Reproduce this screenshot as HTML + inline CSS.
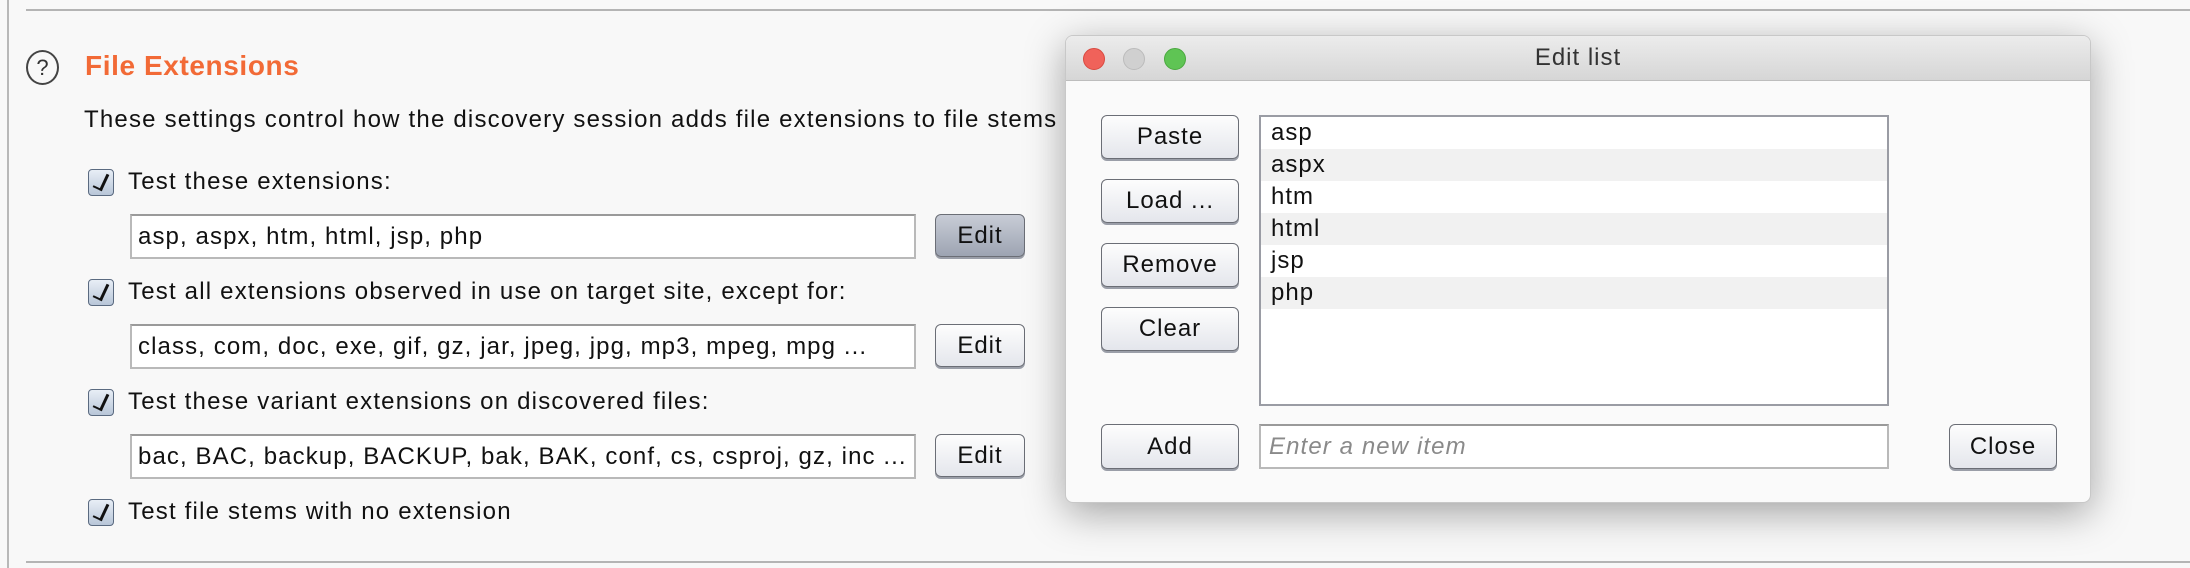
<!DOCTYPE html>
<html><head><meta charset="utf-8"><style>
*{box-sizing:border-box;margin:0;padding:0}
body{width:2190px;height:568px;background:#f8f8f8;position:relative;overflow:hidden;font-family:"Liberation Sans",sans-serif;color:#111}
.a{position:absolute}
.t{font-size:24px;letter-spacing:1.2px;white-space:nowrap}
.cb{position:absolute;width:26px;height:27px;border:1.5px solid #5a6a80;border-radius:4px;background:linear-gradient(#e8eef6,#b8c6d8);}
.cb:after{content:"";position:absolute;left:7px;top:2px;width:7px;height:16px;border-right:3px solid #111;border-bottom:2px solid #111;transform:rotate(25deg)}
.fld{position:absolute;background:#fff;border:2px solid #b9b9b9;border-top-color:#9a9a9a;font-size:24px;letter-spacing:1.1px;padding-left:6px;display:flex;align-items:center;white-space:nowrap;overflow:hidden}
.btn{position:absolute;border:1.5px solid #6b6e76;border-radius:6px;background:linear-gradient(#fdfdfd,#e4e6ec);box-shadow:0 2px 0 #9a9ea8;font-size:24px;letter-spacing:1px;display:flex;align-items:center;justify-content:center}
.row{height:32px;font-size:24px;letter-spacing:1px;padding-left:10px;line-height:32px}
</style></head><body>
<div class="a" style="left:7px;top:0;width:2px;height:568px;background:#b8b8b8"></div>
<div class="a" style="left:26px;top:9px;width:2164px;height:2px;background:#b4b4b4"></div>
<div class="a" style="left:26px;top:561px;width:2164px;height:2px;background:#b4b4b4"></div>
<div class="a" style="left:26px;top:50px;width:33px;height:35px;border:2px solid #444;border-radius:50%;font-size:22px;text-align:center;line-height:31px;color:#333">?</div>
<div class="a" style="left:85px;top:50px;font-size:28px;letter-spacing:0.6px;font-weight:bold;color:#f26a36">File Extensions</div>
<div class="a t" style="left:84px;top:106px;">These settings control how the discovery session adds file extensions to file stems that</div>

<div class="cb" style="left:88px;top:169px"></div><div class="a t" style="left:128px;top:168px">Test these extensions:</div>
<div class="fld" style="left:130px;top:214px;width:786px;height:45px">asp, aspx, htm, html, jsp, php</div>
<div class="btn" style="left:935px;top:214px;width:90px;height:43px;background:linear-gradient(#c8ccd6,#9da4b2);">Edit</div>

<div class="cb" style="left:88px;top:279px"></div><div class="a t" style="left:128px;top:278px">Test all extensions observed in use on target site, except for:</div>
<div class="fld" style="left:130px;top:324px;width:786px;height:45px">class, com, doc, exe, gif, gz, jar, jpeg, jpg, mp3, mpeg, mpg ...</div>
<div class="btn" style="left:935px;top:324px;width:90px;height:43px">Edit</div>

<div class="cb" style="left:88px;top:389px"></div><div class="a t" style="left:128px;top:388px">Test these variant extensions on discovered files:</div>
<div class="fld" style="left:130px;top:434px;width:786px;height:45px">bac, BAC, backup, BACKUP, bak, BAK, conf, cs, csproj, gz, inc ...</div>
<div class="btn" style="left:935px;top:434px;width:90px;height:43px">Edit</div>

<div class="cb" style="left:88px;top:499px"></div><div class="a t" style="left:128px;top:498px">Test file stems with no extension</div>

<div class="a" style="left:1065px;top:35px;width:1026px;height:468px;background:#fafafa;border:1px solid #c8c8c8;border-radius:8px;box-shadow:0 10px 40px rgba(0,0,0,0.35);overflow:hidden">
 <div class="a" style="left:0;top:0;width:100%;height:45px;background:linear-gradient(#ececec,#d6d6d6);border-bottom:1px solid #bdbdbd"></div>
 <div class="a" style="left:17px;top:12px;width:22px;height:22px;border-radius:50%;background:#f0625a;border:1px solid #d8493f"></div>
 <div class="a" style="left:57px;top:12px;width:22px;height:22px;border-radius:50%;background:#d0d0d0;border:1px solid #bbb"></div>
 <div class="a" style="left:98px;top:12px;width:22px;height:22px;border-radius:50%;background:#5fc454;border:1px solid #4aa83f"></div>
 <div class="a" style="left:0;top:8px;width:100%;text-align:center;font-size:24px;letter-spacing:1px;color:#333">Edit list</div>
</div>
<div class="btn" style="left:1101px;top:115px;width:138px;height:44px">Paste</div>
<div class="btn" style="left:1101px;top:179px;width:138px;height:44px">Load ...</div>
<div class="btn" style="left:1101px;top:243px;width:138px;height:44px">Remove</div>
<div class="btn" style="left:1101px;top:307px;width:138px;height:44px">Clear</div>
<div class="btn" style="left:1101px;top:424px;width:138px;height:45px">Add</div>
<div class="a" style="left:1259px;top:115px;width:630px;height:291px;background:#fff;border:2px solid #9a9ca4">
 <div class="row" style="background:#fff">asp</div>
 <div class="row" style="background:#f1f1f1">aspx</div>
 <div class="row" style="background:#fff">htm</div>
 <div class="row" style="background:#f1f1f1">html</div>
 <div class="row" style="background:#fff">jsp</div>
 <div class="row" style="background:#f1f1f1">php</div>
</div>
<div class="fld" style="left:1259px;top:424px;width:630px;height:45px;font-style:italic;color:#8a8a8a;padding-left:8px">Enter a new item</div>
<div class="btn" style="left:1949px;top:424px;width:108px;height:45px">Close</div>
</body></html>
